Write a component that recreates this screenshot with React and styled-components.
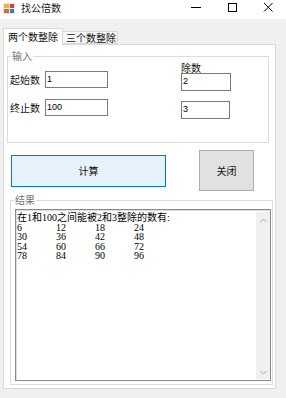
import React from 'react'
import styled, { createGlobalStyle } from 'styled-components'

const GlobalStyle = createGlobalStyle`
html, body {
    margin: 0;
    padding: 0;
    background: #f0f0f0;
    font-family: "Noto Sans CJK SC", "Liberation Sans", sans-serif;
    color: #1a1a1a;
}
`

const Window = styled.div`
width: 286px;
height: 398px;
display: flex;
flex-direction: column;
overflow: hidden;
`
const TitleBar = styled.div`
height: 19px;
background: #ffffff;
display: flex;
align-items: center;
flex-shrink: 0;
`
const AppIcon = styled.svg`
margin-left: 3px;
margin-top: -3px;
`
const Title = styled.div`
margin-left: 6px;
margin-top: -3px;
font-size: 10px;
line-height: 12px;
flex: 1;
`
const Control = styled.div`
width: 36px;
height: 19px;
display: flex;
align-items: center;
justify-content: center;
padding-bottom: 6px;
box-sizing: border-box;
`
const Body = styled.div`
flex: 1;
display: flex;
flex-direction: column;
padding: 9px 10px 9px 3px;
`
const TabStrip = styled.div`
display: flex;
align-items: flex-end;
height: 16px;
position: relative;
z-index: 1;
`
const Tab = styled.div`
box-sizing: border-box;
height: ${p => p.$active ? '17px' : '13px'};
width: ${p => p.$w}px;
background: ${p => p.$active ? '#ffffff' : '#f6f6f6'};
border: 1px solid #d9d9d9;
border-bottom: ${p => p.$active ? 'none' : '1px solid #d9d9d9'};
margin-bottom: ${p => p.$active ? '-1px' : '0'};
margin-left: ${p => p.$active ? '0' : '-1px'};
font-size: 10px;
line-height: ${p => p.$active ? '15px' : '11px'};
padding-left: ${p => p.$active ? '4px' : '3px'};
white-space: nowrap;
color: #111;
`
const Page = styled.div`
flex: 1;
background: #ffffff;
border: 1px solid #d9d9d9;
display: flex;
flex-direction: column;
`
const GroupBox = styled.fieldset`
margin: ${p => p.$margin};
padding: 0;
min-width: 0;
border: 1px solid #dcdcdc;
display: flex;
flex-direction: column;
flex: ${p => p.$grow ? 1 : 'none'};
`
const Legend = styled.legend`
font-size: 10px;
line-height: 12px;
color: #707070;
padding: 0 1px;
margin-left: 3px;
`
const InputArea = styled.div`
height: 80px;
display: flex;
padding-left: 2px;
`
const LeftCol = styled.div`
width: 171px;
display: flex;
flex-direction: column;
gap: 11px;
padding-top: 9px;
`
const RightCol = styled.div`
display: flex;
flex-direction: column;
`
const Field = styled.div`
display: flex;
align-items: center;
`
const Label = styled.span`
width: 35px;
font-size: 10px;
line-height: 11px;
color: #111;
`
const TopLabel = styled.span`
font-size: 10px;
line-height: 11px;
height: 11px;
color: #111;
`
const TextInput = styled.div`
box-sizing: border-box;
width: ${p => p.$w}px;
height: ${p => p.$h}px;
margin-top: ${p => p.$mt || 0}px;
border: 1px solid #7a7a7a;
background: #ffffff;
font-family: "Liberation Sans", sans-serif;
font-size: 9px;
line-height: ${p => p.$h - 3}px;
padding-left: 1px;
color: #000;
`
const ButtonRow = styled.div`
height: 41px;
margin-top: 7px;
padding-left: 7px;
display: flex;
align-items: center;
gap: 33px;
`
const Button = styled.div`
box-sizing: border-box;
width: ${p => p.$w}px;
height: ${p => p.$h}px;
display: flex;
align-items: center;
justify-content: center;
font-size: 10px;
color: #111;
background: ${p => p.$primary ? '#e5f1fb' : '#e1e1e1'};
border: 1px solid ${p => p.$primary ? '#0078d7' : '#adadad'};
`
const ResultBox = styled.div`
flex: 1;
margin: 3px 1px 3px 4px;
display: flex;
border: 1px solid #8a8a8a;
box-shadow: inset 1px 1px 0 #dcdcdc;
background: #ffffff;
`
const ResultText = styled.div`
flex: 1;
padding: 3px 0 0 1px;
font-family: "Liberation Serif", "Noto Sans CJK SC", serif;
font-size: 10px;
line-height: 9.5px;
color: #000;
`
const NumberRow = styled.div`
display: grid;
grid-template-columns: repeat(4, 39px);
`
const ScrollBar = styled.div`
width: 14px;
background: #f0f0f0;
display: flex;
flex-direction: column;
justify-content: space-between;
align-items: center;
padding: 6px 0 4px;
margin: 2px 0 1px;
`

const rows = [
    [6, 12, 18, 24],
    [30, 36, 42, 48],
    [54, 60, 66, 72],
    [78, 84, 90, 96],
]

const App = () => {
    return (
        <Window>
            <GlobalStyle />
            <TitleBar>
                <AppIcon width='12' height='11' viewBox='0 0 12 11'>
                    <rect x='0' y='0' width='12' height='11' fill='#e8e8e8' />
                    <rect x='1' y='1' width='5' height='4' fill='#f2b233' />
                    <rect x='7' y='1' width='4' height='4' fill='#d9402b' />
                    <rect x='1' y='6' width='5' height='4' fill='#e06a2c' />
                    <rect x='7' y='6' width='4' height='4' fill='#3d78c9' />
                </AppIcon>
                <Title>找公倍数</Title>
                <Control>
                    <svg width='10' height='10' viewBox='0 0 10 10'>
                        <line x1='0' y1='5.5' x2='10' y2='5.5' stroke='#000' strokeWidth='1' />
                    </svg>
                </Control>
                <Control>
                    <svg width='10' height='10' viewBox='0 0 10 10'>
                        <rect x='1.5' y='1.5' width='8' height='8' fill='none' stroke='#000' strokeWidth='1' />
                    </svg>
                </Control>
                <Control>
                    <svg width='10' height='10' viewBox='0 0 10 10'>
                        <path d='M1 1 L9.5 9.5 M9.5 1 L1 9.5' stroke='#000' strokeWidth='1' />
                    </svg>
                </Control>
            </TitleBar>
            <Body>
                <TabStrip>
                    <Tab $active $w={60}>两个数整除</Tab>
                    <Tab $w={56}>三个数整除</Tab>
                </TabStrip>
                <Page>
                    <GroupBox $margin='5px 6px 0 3px'>
                        <Legend>输入</Legend>
                        <InputArea>
                            <LeftCol>
                                <Field>
                                    <Label>起始数</Label>
                                    <TextInput $w={63} $h={17}>1</TextInput>
                                </Field>
                                <Field>
                                    <Label>终止数</Label>
                                    <TextInput $w={63} $h={17}>100</TextInput>
                                </Field>
                            </LeftCol>
                            <RightCol>
                                <TopLabel>除数</TopLabel>
                                <TextInput $w={50} $h={18}>2</TextInput>
                                <TextInput $w={49} $h={18} $mt={10}>3</TextInput>
                            </RightCol>
                        </InputArea>
                    </GroupBox>
                    <ButtonRow>
                        <Button $primary $w={155} $h={32}>计算</Button>
                        <Button $w={55} $h={41}>关闭</Button>
                    </ButtonRow>
                    <GroupBox $margin='3px 2px 3px 6px' $grow>
                        <Legend>结果</Legend>
                        <ResultBox>
                            <ResultText>
                                <div>在1和100之间能被2和3整除的数有:</div>
                                {rows.map((r, i) => (
                                    <NumberRow key={i}>
                                        {r.map(n => <span key={n}>{n}</span>)}
                                    </NumberRow>
                                ))}
                            </ResultText>
                            <ScrollBar>
                                <svg width='7' height='5' viewBox='0 0 7 5'>
                                    <path d='M0.5 4 L3.5 1 L6.5 4' fill='none' stroke='#a6a6a6' strokeWidth='1' />
                                </svg>
                                <svg width='7' height='5' viewBox='0 0 7 5'>
                                    <path d='M0.5 1 L3.5 4 L6.5 1' fill='none' stroke='#a6a6a6' strokeWidth='1' />
                                </svg>
                            </ScrollBar>
                        </ResultBox>
                    </GroupBox>
                </Page>
            </Body>
        </Window>
    )
}

export default App
